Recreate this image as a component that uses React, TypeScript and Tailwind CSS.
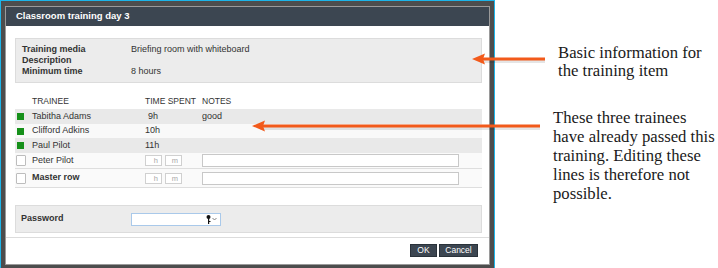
import React from 'react';

interface Trainee {
  name: string;
  time: string;
  notes: string;
  rowClass: string;
}

const passedTrainees: Trainee[] = [
  { name: 'Tabitha Adams', time: '9h', notes: 'good', rowClass: 'h-[15px] bg-[#e9e9e9]' },
  { name: 'Clifford Adkins', time: '10h', notes: '', rowClass: 'h-[14px] bg-[#f9f9f9]' },
  { name: 'Paul Pilot', time: '11h', notes: '', rowClass: 'h-[15px] bg-[#e9e9e9]' },
];

const openRows = [
  { name: 'Peter Pilot', bold: false, rowClass: 'h-[16px]' },
  { name: 'Master row', bold: true, rowClass: 'h-[19px]' },
];

const Arrow: React.FC<{ x1: number; x2: number; y: number }> = ({ x1, x2, y }) => (
  <g>
    <line x1={x1 + 8} y1={y + 2} x2={x2} y2={y + 2} stroke="#000" strokeOpacity="0.1" strokeWidth="4" />
    <line x1={x1 + 10} y1={y} x2={x2} y2={y} stroke="#f25a1b" strokeWidth="3" />
    <polygon points={`${x1},${y} ${x1 + 13},${y - 5.5} ${x1 + 11},${y} ${x1 + 13},${y + 5.5}`} fill="#f25a1b" />
  </g>
);

const App: React.FC = () => {
  return (
    <div className="relative flex w-[718px] h-[268px] overflow-hidden bg-white">
      {/* Dialog frame */}
      <div className="w-[495px] h-[268px] shrink-0 border-x border-t border-[#1cb5ea] bg-[#4d4d4d] pt-[5px] px-[4px] pb-[3px]">
        <div className="flex flex-col h-full bg-white border border-[#9a9a9a] font-['Liberation_Sans',Arial,sans-serif] text-[9px] text-[#333]">
          {/* Title */}
          <div className="h-[19px] shrink-0 flex items-center pl-[10px] bg-[#3c4651] text-white font-bold text-[9.5px]">
            Classroom training day 3
          </div>

          <div className="flex-1 pl-[9px] pr-[7px]">
            {/* Basic info */}
            <div className="mt-[12px] border border-[#dcdcdc] bg-[#ececec] pl-[6px] py-[5px] grid grid-cols-[109px_1fr] leading-[11px]">
              <span className="font-bold">Training media</span>
              <span>Briefing room with whiteboard</span>
              <span className="font-bold">Description</span>
              <span></span>
              <span className="font-bold">Minimum time</span>
              <span>8 hours</span>
            </div>

            {/* Trainees */}
            <div className="mt-[10px] h-[16px] grid grid-cols-[130px_57px_1fr] items-center text-[8.5px] uppercase">
              <span className="pl-[17px]">Trainee</span>
              <span>Time spent</span>
              <span>Notes</span>
            </div>

            {passedTrainees.map((t) => (
              <div key={t.name} className={`grid grid-cols-[130px_57px_1fr] items-center ${t.rowClass}`}>
                <div className="flex items-center">
                  <div className="w-[17px] pl-[2px]">
                    <div className="w-[7px] h-[7px] bg-[#16901a]"></div>
                  </div>
                  <span>{t.name}</span>
                </div>
                <span className="w-[13px] text-right whitespace-nowrap">{t.time}</span>
                <span>{t.notes}</span>
              </div>
            ))}

            {openRows.map((r) => (
              <div key={r.name} className={`grid grid-cols-[130px_57px_1fr] items-center bg-[#fafafa] border-b border-[#dedede] ${r.rowClass}`}>
                <div className="flex items-center">
                  <div className="w-[17px] pl-[1px]">
                    <div className="w-[10px] h-[11px] bg-white border border-[#bdbdbd] rounded-[1px]"></div>
                  </div>
                  <span className={r.bold ? 'font-bold' : ''}>{r.name}</span>
                </div>
                <div className="flex gap-[3px]">
                  <div className="w-[17px] h-[11px] bg-white border border-[#d0d0d0] text-[7.5px] leading-[9px] text-[#a8a8a8] text-right pr-[3px]">h</div>
                  <div className="w-[17px] h-[11px] bg-white border border-[#d0d0d0] text-[7.5px] leading-[9px] text-[#a8a8a8] text-right pr-[3px]">m</div>
                </div>
                <div className="w-[257px] h-[13px] bg-white border border-[#c8c8c8]"></div>
              </div>
            ))}

            {/* Password */}
            <div className="mt-[17px] h-[28px] border border-[#dcdcdc] bg-[#ececec] pl-[5px] grid grid-cols-[110px_1fr] items-center">
              <span className="font-bold">Password</span>
              <div className="w-[90px] h-[13px] bg-white border border-[#a9c9ea] flex items-center justify-end pr-[3px] gap-[1px]">
                <svg width="5" height="9" viewBox="0 0 5 9">
                  <circle cx="2.5" cy="2" r="2" fill="#111" />
                  <rect x="2" y="3" width="1.2" height="6" fill="#111" />
                  <rect x="3" y="6" width="1.5" height="1" fill="#111" />
                </svg>
                <svg width="5" height="4" viewBox="0 0 5 4">
                  <path d="M0.5 1 L2.5 3 L4.5 1" stroke="#777" strokeWidth="0.9" fill="none" />
                </svg>
              </div>
            </div>
          </div>

          {/* Footer */}
          <div className="h-[27px] shrink-0 border-t border-[#dcdcdc] flex justify-end items-start pt-[6px] pr-[11px] gap-[2px]">
            <button className="w-[27px] h-[13px] bg-[#3c4651] border border-[#2a323a] text-white text-[8.5px] leading-[11px]">OK</button>
            <button className="w-[39px] h-[13px] bg-[#3c4651] border border-[#2a323a] text-white text-[8.5px] leading-[11px]">Cancel</button>
          </div>
        </div>
      </div>

      {/* Annotations */}
      <div className="flex-1 font-['Liberation_Serif','Times_New_Roman',serif] text-[16.7px] text-[#1a1a1a]">
        <div className="ml-[63px] mt-[44px] leading-[18px]">
          <div>Basic information for</div>
          <div>the training item</div>
        </div>
        <div className="ml-[58px] mt-[28px] leading-[19px]">
          <div>These three trainees</div>
          <div>have already passed this</div>
          <div>training. Editing these</div>
          <div>lines is therefore not</div>
          <div>possible.</div>
        </div>
      </div>

      {/* Arrows */}
      <svg className="absolute left-0 top-0 pointer-events-none" width="718" height="268">
        <Arrow x1={472} x2={545} y={59} />
        <Arrow x1={252} x2={540} y={126} />
      </svg>
    </div>
  );
};

export default App;
